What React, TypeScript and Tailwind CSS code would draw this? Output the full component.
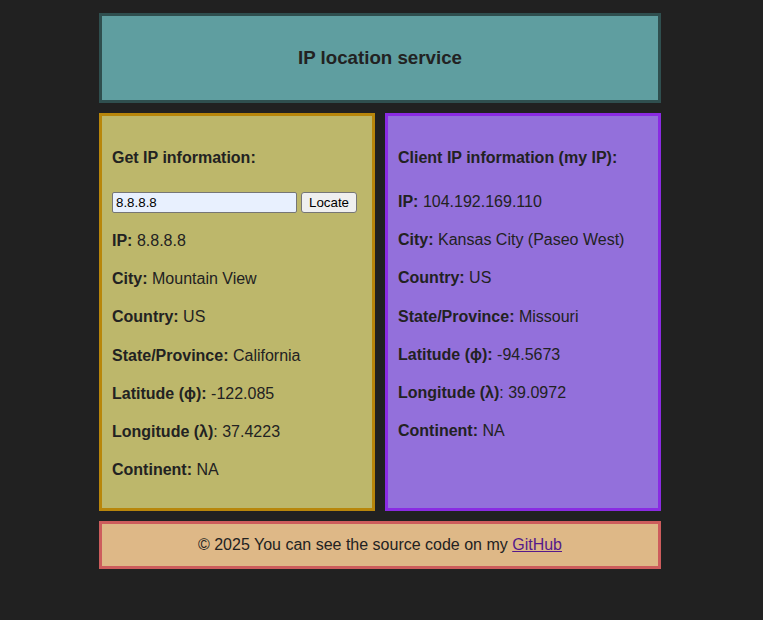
import React from "react";

const font = { fontFamily: '"Liberation Sans", Arial, sans-serif' };

function Row({ label, value, colonInLabel = true }: { label: string; value: string; colonInLabel?: boolean }) {
  return (
    <p className="leading-[22.2px] text-[16px]">
      <strong>{colonInLabel ? `${label}:` : label}</strong>
      {colonInLabel ? ` ${value}` : `: ${value}`}
    </p>
  );
}

export default function App() {
  const lookup = [
    { label: "IP", value: "8.8.8.8" },
    { label: "City", value: "Mountain View" },
    { label: "Country", value: "US" },
    { label: "State/Province", value: "California" },
    { label: "Latitude (ϕ)", value: "-122.085" },
    { label: "Longitude (λ)", value: "37.4223", colon: false },
    { label: "Continent", value: "NA" },
  ];
  const client = [
    { label: "IP", value: "104.192.169.110" },
    { label: "City", value: "Kansas City (Paseo West)" },
    { label: "Country", value: "US" },
    { label: "State/Province", value: "Missouri" },
    { label: "Latitude (ϕ)", value: "-94.5673" },
    { label: "Longitude (λ)", value: "39.0972", colon: false },
    { label: "Continent", value: "NA" },
  ];

  return (
    <div className="min-h-[620px] bg-[#212121] text-[#222222] pt-[13px]" style={font}>
      <div className="ml-[99px] w-[562px] flex flex-col gap-[10px]">
        <header className="h-[90px] border-[3px] border-[#2f4f4f] bg-[#5f9ea0] flex items-center justify-center">
          <h1 className="text-[18.72px] font-bold leading-[22px]">IP location service</h1>
        </header>

        <div className="grid grid-cols-2 gap-[10px]">
          <section className="border-[3px] border-[#b8860b] bg-[#bdb76b] px-[10px] pt-[31px] pb-[27px] flex flex-col">
            <h2 className="text-[16px] font-bold leading-[22px]">Get IP information:</h2>
            <form className="mt-[21px] h-[24px] flex items-center gap-[4px]" onSubmit={(e) => e.preventDefault()}>
              <input
                defaultValue="8.8.8.8"
                className="w-[185px] h-[21px] bg-[#e8f0fe] border border-[#767676] rounded-[2px] px-[3px] text-[13.33px] text-black outline-none"
                style={font}
              />
              <button
                type="submit"
                className="w-[56px] h-[21px] bg-[#efefef] border border-[#767676] rounded-[3px] text-[13.33px] text-black"
                style={font}
              >
                Locate
              </button>
            </form>
            <div className="mt-[16px] flex flex-col gap-[16px]">
              {lookup.map((r) => (
                <Row key={r.label} label={r.label} value={r.value} colonInLabel={r.colon !== false} />
              ))}
            </div>
          </section>

          <section className="border-[3px] border-[#8a2be2] bg-[#9370db] px-[10px] pt-[31px] pb-[27px] flex flex-col">
            <h2 className="text-[16px] font-bold leading-[22px]">Client IP information (my IP):</h2>
            <div className="mt-[22px] flex flex-col gap-[16px]">
              {client.map((r) => (
                <Row key={r.label} label={r.label} value={r.value} colonInLabel={r.colon !== false} />
              ))}
            </div>
          </section>
        </div>

        <footer className="h-[48px] border-[3px] border-[#cd5c5c] bg-[#deb887] flex items-center justify-center text-[16px]">
          <p>
            © 2025 You can see the source code on my{" "}
            <a href="#" className="text-[#551a8b] underline">
              GitHub
            </a>
          </p>
        </footer>
      </div>
    </div>
  );
}
